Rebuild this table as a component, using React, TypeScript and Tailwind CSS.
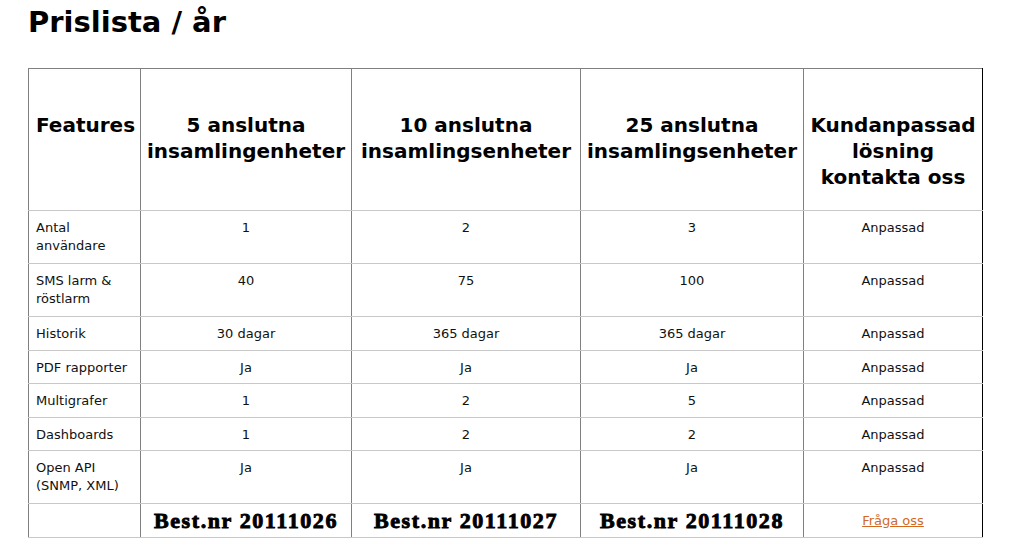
const font = { fontFamily: '"DejaVu Sans", Verdana, sans-serif' };

const columns = [
  "Features",
  "5 anslutna insamlingenheter",
  "10 anslutna insamlingsenheter",
  "25 anslutna insamlingsenheter",
  "Kundanpassad lösning kontakta oss",
];

const rows: { label: string; values: string[]; tall?: boolean }[] = [
  { label: "Antal användare", values: ["1", "2", "3", "Anpassad"], tall: true },
  { label: "SMS larm & röstlarm", values: ["40", "75", "100", "Anpassad"], tall: true },
  { label: "Historik", values: ["30 dagar", "365 dagar", "365 dagar", "Anpassad"] },
  { label: "PDF rapporter", values: ["Ja", "Ja", "Ja", "Anpassad"] },
  { label: "Multigrafer", values: ["1", "2", "5", "Anpassad"] },
  { label: "Dashboards", values: ["1", "2", "2", "Anpassad"] },
  { label: "Open API (SNMP, XML)", values: ["Ja", "Ja", "Ja", "Anpassad"], tall: true },
];

const orderNumbers = ["20111026", "20111027", "20111028"];

const cell = "border-l border-b border-l-[#808080] border-b-[#c8c8c8] align-top px-2 pt-2 pb-0";

export default function App() {
  return (
    <div className="min-h-screen bg-white text-[#111]" style={font}>
      <div className="pl-[28px] pt-[4px]">
        <h1 className="text-[29px] font-bold leading-[36px] text-black">Prislista / år</h1>

        <table className="mt-[28px] w-[954px] table-fixed border-collapse border-r border-r-black text-[13px] leading-[18px]">
          <colgroup>
            <col className="w-[112px]" />
            <col className="w-[211px]" />
            <col className="w-[229px]" />
            <col className="w-[223px]" />
            <col className="w-[179px]" />
          </colgroup>
          <thead>
            <tr className="h-[142px]">
              {columns.map((c, i) => (
                <th
                  key={c}
                  className={`border-l border-t border-b border-l-[#808080] border-t-[#808080] border-b-[#c8c8c8] align-top pt-[43px] text-[20px] font-bold leading-[26px] text-black ${
                    i === 0 ? "px-[7px] text-left" : "px-1 text-center"
                  } ${i === 4 ? "border-r border-r-black" : ""}`}
                >
                  {c}
                </th>
              ))}
            </tr>
          </thead>
          <tbody>
            {rows.map((r) => (
              <tr key={r.label} className={r.tall ? "h-[53px]" : "h-[33.5px]"}>
                <td className={`${cell} pl-[7px] text-left`}>{r.label}</td>
                {r.values.map((v, i) => (
                  <td key={i} className={`${cell} text-center ${i === 3 ? "border-r border-r-black" : ""}`}>
                    {v}
                  </td>
                ))}
              </tr>
            ))}
            <tr className="h-[34px]">
              <td className={cell}></td>
              {orderNumbers.map((n) => (
                <td key={n} className="border-l border-b border-l-[#808080] border-b-[#c8c8c8] p-0 text-center align-middle">
                  <span
                    className="block text-[22px] font-bold leading-[30px] tracking-[1.6px] text-black [-webkit-text-stroke:0.9px_black]"
                    style={{ fontFamily: '"Liberation Serif", "Times New Roman", serif' }}
                  >
                    Best.nr {n}
                  </span>
                </td>
              ))}
              <td className={`${cell} text-center border-r border-r-black`}>
                <a href="#" className="text-[#d2691e] underline">
                  Fråga oss
                </a>
              </td>
            </tr>
          </tbody>
        </table>
      </div>
    </div>
  );
}
